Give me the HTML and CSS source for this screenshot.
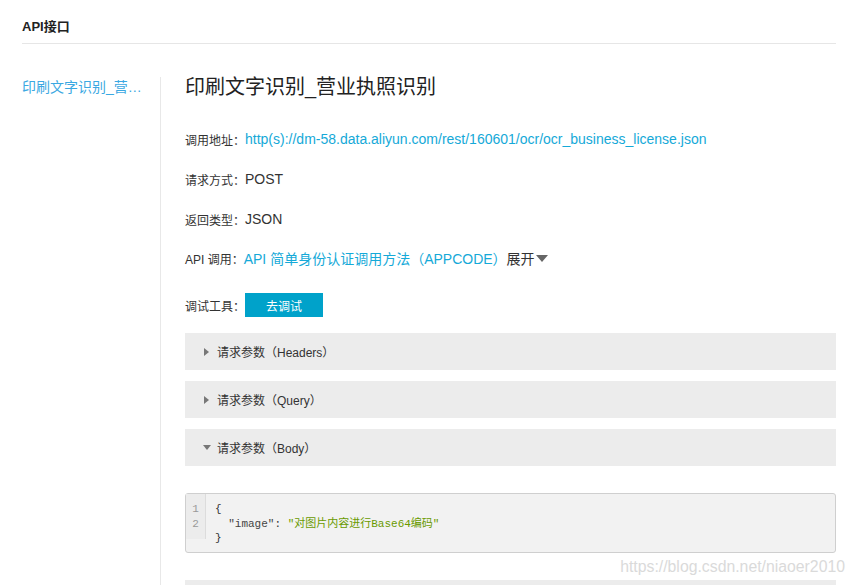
FILE: index.html
```html
<!DOCTYPE html>
<html lang="zh">
<head>
<meta charset="utf-8">
<title>API接口</title>
<link rel="stylesheet" href="styles.css">
</head>
<body>
<div class="page">
  <div class="header">API接口</div>
  <div class="main">
    <aside class="sidebar">
      <a class="side-link">印刷文字识别_营业执照识别</a>
    </aside>
    <section class="content">
      <h1 class="title">印刷文字识别_营业执照识别</h1>
      <div class="row"><span class="label">调用地址：</span><a class="link">http(s)://dm-58.data.aliyun.com/rest/160601/ocr/ocr_business_license.json</a></div>
      <div class="row"><span class="label">请求方式：</span><span class="value">POST</span></div>
      <div class="row row-3"><span class="label">返回类型：</span><span class="value">JSON</span></div>
      <div class="row"><span class="label">API 调用：</span><a class="link">API 简单身份认证调用方法（APPCODE）</a><span class="value">展开</span><span class="caret"></span></div>
      <div class="row row-btn"><span class="label">调试工具：</span><button class="btn">去调试</button></div>
      <div class="panel"><span class="tri tri-right"></span>请求参数（Headers）</div>
      <div class="panel"><span class="tri tri-right"></span>请求参数（Query）</div>
      <div class="panel"><span class="tri tri-down"></span>请求参数（Body）</div>
      <div class="code">
        <div class="gutter"><div>1</div><div>2</div></div>
        <pre class="code-text">{
  <span class="key">"image"</span>: <span class="str">"对图片内容进行Base64编码"</span>
}</pre>
      </div>
      <div class="panel panel-last"></div>
    </section>
  </div>
</div>
<div class="watermark">https://blog.csdn.net/niaoer2010</div>
</body>
</html>
```
FILE: styles.css
```css
html, body {
  margin: 0;
  padding: 0;
  background: #fff;
  font-family: "Liberation Sans", Arial, "Noto Sans CJK SC", sans-serif;
  color: #333;
  overflow: hidden;
}
.page {
  padding: 0 18px 0 22px;
}
.header {
  height: 43px;
  line-height: 54px;
  font-size: 13px;
  font-weight: bold;
  color: #222;
  border-bottom: 1px solid #e6e6e6;
}
.main {
  display: flex;
  margin-top: 33px;
}
.sidebar {
  width: 138px;
  flex: none;
  border-right: 1px solid #e8e8e8;
  min-height: 540px;
}
.side-link {
  display: block;
  width: 120px;
  font-size: 14px;
  line-height: 20px;
  color: #3ba8e2;
  white-space: nowrap;
  overflow: hidden;
  text-overflow: ellipsis;
}
.content {
  flex: 1;
  padding-left: 24px;
}
.title {
  margin: 0 0 32px;
  font-size: 20px;
  font-weight: normal;
  line-height: 20px;
  color: #222;
}
.row {
  display: flex;
  align-items: center;
  height: 20px;
  margin-bottom: 20px;
  font-size: 12px;
}
.row-3 {
  margin-bottom: 19px;
}
.label {
  color: #333;
}
.link {
  font-size: 14px;
  color: #15a9d8;
}
.value {
  font-size: 14px;
  color: #333;
}
.caret {
  width: 0;
  height: 0;
  margin-left: 1px;
  border-left: 6px solid transparent;
  border-right: 6px solid transparent;
  border-top: 7px solid #666;
}
.row-btn {
  height: 24px;
  margin-top: 25px;
  margin-bottom: 16px;
}
.btn {
  width: 78px;
  height: 24px;
  border: 0;
  padding: 0;
  background: #00a2ca;
  color: #fff;
  font-family: inherit;
  font-size: 12px;
}
.panel {
  display: flex;
  align-items: center;
  height: 37px;
  margin-bottom: 11px;
  padding-left: 18px;
  background: #ececec;
  font-size: 12px;
  color: #333;
}
.tri {
  width: 0;
  height: 0;
}
.tri-right {
  border-top: 4px solid transparent;
  border-bottom: 4px solid transparent;
  border-left: 5px solid #777;
  margin-left: 1px;
  margin-right: 8px;
}
.tri-down {
  border-left: 4px solid transparent;
  border-right: 4px solid transparent;
  border-top: 5px solid #777;
  margin-right: 6px;
}
.code {
  display: flex;
  align-items: flex-start;
  margin-top: 27px;
  height: 58px;
  border: 1px solid #cfcfcf;
  border-radius: 3px;
  background: #f2f2f2;
}
.gutter {
  width: 19px;
  padding: 8px 0 8px;
  border-right: 1px solid #dcdcdc;
  background: #ececec;
  text-align: center;
  font-family: "Liberation Mono", monospace;
  font-size: 11px;
  line-height: 14.5px;
  color: #999;
}
.code-text {
  margin: 0;
  padding: 8px 0 0 9px;
  font-family: "Liberation Mono", "Noto Sans CJK SC", monospace;
  font-size: 11px;
  line-height: 14.5px;
  color: #333;
}
.key {
  color: #444;
}
.str {
  color: #6a9a00;
}
.panel-last {
  margin-top: 27px;
}
.watermark {
  position: absolute;
  right: 9px;
  top: 558px;
  font-size: 15.8px;
  color: #dadada;
  font-family: "Liberation Sans", Arial, sans-serif;
}
```
